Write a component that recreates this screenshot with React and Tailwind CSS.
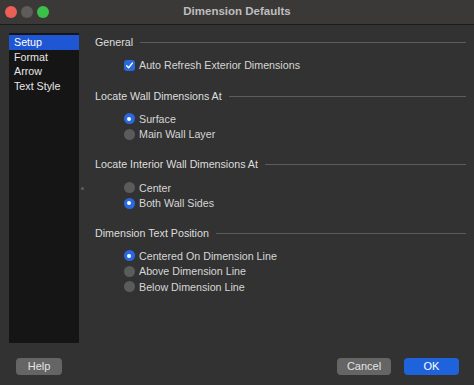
import React from "react"

const font = { fontFamily: '"Liberation Sans", Arial, sans-serif' }

const SectionHeading = ({ title, className = "" }) => (
  <div className={`flex h-[14px] items-center gap-[7px] ${className}`}>
    <span className="whitespace-nowrap text-[10.7px] text-[#dedede]">{title}</span>
    <span className="h-px flex-1 bg-[#5c5c5c]" />
  </div>
)

const Radio = ({ label, checked }) => (
  <div className="flex h-[15.5px] items-center gap-[4.5px]">
    {checked ? (
      <span className="flex h-[11px] w-[11px] items-center justify-center rounded-full bg-[#2a68de]">
        <span className="h-[4px] w-[4px] rounded-full bg-white" />
      </span>
    ) : (
      <span className="h-[11px] w-[11px] rounded-full bg-[#5b5b5b]" />
    )}
    <span className="whitespace-nowrap text-[10.7px] text-[#d6d6d6]">{label}</span>
  </div>
)

const Button = ({ children, primary, className = "" }) => (
  <button
    className={`flex h-[17px] items-center justify-center rounded-[4px] text-[11px] ${
      primary ? "bg-[#1e63dc] text-white" : "bg-[#656565] text-[#e4e4e4]"
    } ${className}`}
  >
    {children}
  </button>
)

const pages = ["Setup", "Format", "Arrow", "Text Style"]

export default function App() {
  return (
    <div className="flex h-[385px] w-[474px] flex-col bg-[#323232]" style={font}>
      {/* title bar */}
      <div className="grid h-[25px] grid-cols-[1fr_auto_1fr] items-center border-b border-[#1c1c1c] bg-[#3b3938]">
        <div className="flex items-center gap-[4px] pl-[5px]">
          <span className="h-[12px] w-[12px] rounded-full bg-[#ec5f57]" />
          <span className="h-[12px] w-[12px] rounded-full bg-[#5e5c5b]" />
          <span className="h-[12px] w-[12px] rounded-full bg-[#3bc14a]" />
        </div>
        <span className="text-[11.5px] font-bold text-[#bebebe]">Dimension Defaults</span>
        <div />
      </div>

      {/* body */}
      <div className="flex pl-[9px]">
        <div className="mt-[8px] flex h-[310px] w-[70px] flex-col bg-[#151515] pt-[2px]">
          {pages.map((p, i) => (
            <div
              key={p}
              className={`flex h-[14.5px] items-center pl-[5px] text-[10.7px] ${
                i === 0 ? "bg-[#1f56d3] text-white" : "text-[#e6e6e6]"
              }`}
            >
              {p}
            </div>
          ))}
        </div>

        <div className="mt-[8px] flex h-[310px] w-[16px] items-center pl-[2px]">
          <span className="h-[3px] w-[3px] rounded-full bg-[#5e5e5e]" />
        </div>

        <div className="flex flex-1 flex-col pr-[8px] pt-[10px]">
          <SectionHeading title="General" />
          <div className="mt-[9px] flex h-[15px] items-center gap-[4px] pl-[29px]">
            <span className="flex h-[11px] w-[11px] items-center justify-center rounded-[3px] bg-[#2a68de]">
              <svg viewBox="0 0 12 12" className="h-[9px] w-[9px]" fill="none">
                <path d="M2.2 6.3 4.8 8.9 9.8 2.8" stroke="white" strokeWidth="1.9" strokeLinecap="round" strokeLinejoin="round" />
              </svg>
            </span>
            <span className="whitespace-nowrap text-[10.7px] text-[#d6d6d6]">Auto Refresh Exterior Dimensions</span>
          </div>

          <SectionHeading title="Locate Wall Dimensions At" className="mt-[16px]" />
          <div className="mt-[8px] flex flex-col pl-[28.5px]">
            <Radio label="Surface" checked />
            <Radio label="Main Wall Layer" />
          </div>

          <SectionHeading title="Locate Interior Wall Dimensions At" className="mt-[15px]" />
          <div className="mt-[9px] flex flex-col pl-[28.5px]">
            <Radio label="Center" />
            <Radio label="Both Wall Sides" checked />
          </div>

          <SectionHeading title="Dimension Text Position" className="mt-[15px]" />
          <div className="mt-[8px] flex flex-col pl-[28.5px]">
            <Radio label="Centered On Dimension Line" checked />
            <Radio label="Above Dimension Line" />
            <Radio label="Below Dimension Line" />
          </div>
        </div>
      </div>

      {/* footer */}
      <div className="flex items-center justify-between pl-[16px] pr-[15px] pt-[15px]">
        <Button className="w-[46px]">Help</Button>
        <div className="flex gap-[13px]">
          <Button className="w-[54px]">Cancel</Button>
          <Button primary className="w-[55px]">OK</Button>
        </div>
      </div>
    </div>
  )
}
